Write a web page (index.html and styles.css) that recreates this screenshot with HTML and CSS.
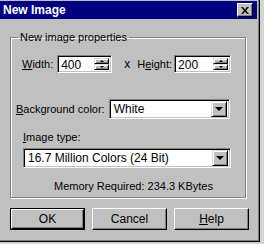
FILE: index.html
```html
<!DOCTYPE html>
<html>
<head>
	<title>New Image</title>
	<link rel="stylesheet" href="styles.css">
</head>
<body>
	<div class="dialog">
		<div class="titlebar">
			<span class="title">New Image</span>
			<span class="close">
				<svg width="8" height="7" viewBox="0 0 8 7"><path d="M0 0h2l2 2.5L6 0h2L5 3.5 8 7H6L4 4.5 2 7H0l3-3.5z" fill="#000"/></svg>
			</span>
		</div>

		<fieldset class="group">
			<legend>New image properties</legend>

			<div class="size-row">
				<label class="lbl-width"><u>W</u>idth:</label>
				<div class="spin sunken spin-width">
					<span class="spin-value">400</span>
					<span class="arrows">
						<span class="arrow raised"><i class="tri-up"></i></span>
						<span class="arrow raised"><i class="tri-down"></i></span>
					</span>
				</div>
				<span class="times">x</span>
				<label class="lbl-height">H<u>e</u>ight:</label>
				<div class="spin sunken spin-height">
					<span class="spin-value">200</span>
					<span class="arrows">
						<span class="arrow raised"><i class="tri-up"></i></span>
						<span class="arrow raised"><i class="tri-down"></i></span>
					</span>
				</div>
			</div>

			<div class="bg-row">
				<label class="lbl-bg"><u>B</u>ackground color:</label>
				<div class="combo sunken combo-bg">
					<span class="combo-value">White</span>
					<span class="drop raised"><i class="tri-drop"></i></span>
				</div>
			</div>

			<div class="type-label"><u>I</u>mage type:</div>
			<div class="combo sunken combo-type">
				<span class="combo-value">16.7 Million Colors (24 Bit)</span>
				<span class="drop raised"><i class="tri-drop"></i></span>
			</div>

			<div class="memory">Memory Required: 234.3 KBytes</div>
		</fieldset>

		<div class="buttons">
			<div class="btn default"><span class="btn-face">OK</span></div>
			<div class="btn"><span class="btn-face">Cancel</span></div>
			<div class="btn"><span class="btn-face"><u>H</u>elp</span></div>
		</div>
	</div>
</body>
</html>
```

FILE: styles.css
```css
body {
	margin: 0;
	background-color: #d4d4d4;
	font-family: "Liberation Sans", Arial, sans-serif;
	font-size: 11px;
	color: #000;
}
.dialog {
	width: 259px;
	height: 241px;
	background-color: #c0c0c0;
	border-right: 1px solid #000;
	border-bottom: 1px solid #000;
	box-shadow: inset -1px -1px #808080;
	box-sizing: content-box;
	overflow: hidden;
}

/* title bar */
.titlebar {
	height: 18px;
	margin: 1px 2px 0 0;
	background-color: #000080;
	display: flex;
	align-items: center;
	justify-content: space-between;
	padding: 0 4px 0 3px;
}
.title {
	color: #fff;
	font-weight: bold;
	font-size: 12px;
}
.close {
	width: 14px;
	height: 12px;
	display: flex;
	align-items: center;
	justify-content: center;
	background-color: #c0c0c0;
	border: 1px solid;
	border-color: #fff #000 #000 #fff;
	box-shadow: inset -1px -1px #808080;
}

/* 3d helpers */
.sunken {
	background-color: #fff;
	border: 1px solid;
	border-color: #808080 #fff #fff #808080;
	box-shadow: inset 1px 1px #000, inset -1px -1px #c0c0c0;
	box-sizing: border-box;
}
.raised {
	background-color: #c0c0c0;
	border: 1px solid;
	border-color: #dfdfdf #000 #000 #dfdfdf;
	box-shadow: inset 1px 1px #fff, inset -1px -1px #808080;
	box-sizing: border-box;
}

/* group box */
.group {
	margin: 12px 0 0 10px;
	width: 236px;
	height: 167px;
	padding: 0;
	border: 1px solid #808080;
	box-shadow: inset 1px 1px #fff, 1px 1px #fff;
	box-sizing: border-box;
}
.group legend {
	margin-left: 7px;
	padding: 0 2px;
	line-height: 13px;
}
u {
	text-decoration: underline;
	text-underline-offset: 1px;
}

/* width / height */
.size-row {
	display: flex;
	align-items: center;
	margin-top: 11px;
	padding-left: 11px;
}
.spin {
	height: 18px;
	display: flex;
	padding: 2px;
}
.spin-value {
	flex: 1;
	font-size: 12px;
	line-height: 14px;
	padding-left: 1px;
}
.spin-width {
	width: 55px;
	margin-left: 4px;
}
.spin-height {
	width: 57px;
	margin-left: 2px;
}
.arrows {
	width: 15px;
	display: flex;
	flex-direction: column;
}
.arrow {
	flex: 1;
	display: flex;
	align-items: center;
	justify-content: center;
}
.tri-up {
	border-left: 2px solid transparent;
	border-right: 2px solid transparent;
	border-bottom: 2px solid #000;
}
.tri-down {
	border-left: 2px solid transparent;
	border-right: 2px solid transparent;
	border-top: 2px solid #000;
}
.times {
	margin-left: 12px;
	font-size: 12px;
}
.lbl-height {
	margin-left: 7px;
}

/* combos */
.bg-row {
	display: flex;
	align-items: center;
	margin-top: 26px;
	padding-left: 5px;
}
.combo {
	height: 20px;
	display: flex;
	align-items: center;
	padding: 2px;
}
.combo-value {
	flex: 1;
	font-size: 12px;
	padding-left: 2px;
}
.combo-bg {
	width: 121px;
	margin-left: 4px;
}
.drop {
	width: 16px;
	height: 16px;
	display: flex;
	align-items: center;
	justify-content: center;
}
.tri-drop {
	border-left: 4px solid transparent;
	border-right: 4px solid transparent;
	border-top: 4px solid #000;
}
.type-label {
	margin: 12px 0 0 12px;
	line-height: 13px;
}
.combo-type {
	width: 208px;
	margin: 4px 0 0 12px;
}
.memory {
	margin-top: 12px;
	padding-left: 43px;
	line-height: 13px;
}

/* buttons */
.buttons {
	display: flex;
	gap: 7px;
	margin: 10px 0 0 10px;
}
.btn {
	width: 75px;
	height: 22px;
	box-sizing: border-box;
	display: flex;
}
.btn-face {
	flex: 1;
	display: flex;
	align-items: center;
	justify-content: center;
	background-color: #c0c0c0;
	border: 1px solid;
	border-color: #fff #000 #000 #fff;
	box-shadow: inset -1px -1px #808080;
	font-size: 12px;
}
.default {
	border: 1px solid #000;
}
```
